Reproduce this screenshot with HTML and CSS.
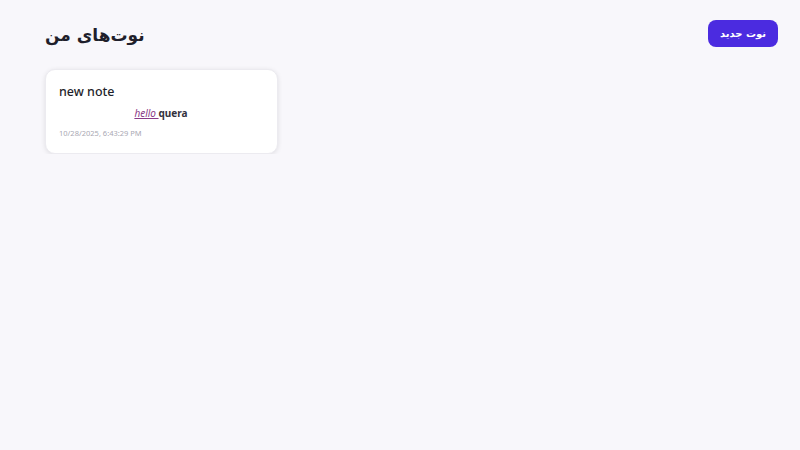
FILE: index.html
```html
<!DOCTYPE html>
<html lang="fa">
<head>
    <meta charset="UTF-8">
    <meta name="viewport" content="width=device-width, initial-scale=1.0">
    <title>نوت‌های من</title>
    <link rel="stylesheet" href="styles.css">
</head>
<body>
    <div class="page">
        <header class="top">
            <h1 class="title" dir="rtl">نوت‌های من</h1>
            <button class="new-btn" dir="rtl">نوت جدید</button>
        </header>

        <div class="notes">
            <div class="note">
                <h2 class="note-title">new note</h2>
                <div class="note-body"><u class="hl">hello </u><b>quera</b></div>
                <div class="note-date">10/28/2025, 6:43:29 PM</div>
            </div>
        </div>
    </div>
</body>
</html>
```

FILE: styles.css
```css
body {
    margin: 0;
    background-color: #f8f7fb;
    font-family: 'Noto Sans', 'DejaVu Sans', sans-serif;
    color: #1f1f2b;
}

.page {
    padding: 20px 22px 0 45px;
}

.top {
    display: flex;
    justify-content: space-between;
    align-items: center;
    height: 26px;
}

.title {
    margin: 4px 0 0 0;
    font-family: 'DejaVu Sans', sans-serif;
    font-size: 17px;
    font-weight: bold;
    color: #1f1f2b;
}

.new-btn {
    background-color: #4b2be0;
    color: #ffffff;
    border: none;
    border-radius: 8px;
    width: 70px;
    height: 27px;
    font-family: 'DejaVu Sans', sans-serif;
    font-size: 10px;
    font-weight: bold;
    cursor: pointer;
}

.notes {
    display: flex;
    margin-top: 23px;
}

.note {
    width: 204px;
    background: #ffffff;
    border: 1px solid #ecebf0;
    border-radius: 10px;
    padding: 13px 14px 15px 13px;
    box-shadow: 0 1px 5px rgba(0, 0, 0, 0.1);
}

.note-title {
    margin: 0;
    font-size: 12.5px;
    font-weight: 500;
    color: #1f1f2b;
}

.note-body {
    text-align: center;
    font-size: 10px;
    margin-top: 6px;
}

.hl {
    color: #8a3a86;
    font-style: italic;
}

.note-body b {
    color: #33323d;
}

.note-date {
    margin-top: 8px;
    font-size: 7.5px;
    color: #a9a8b3;
}
```
